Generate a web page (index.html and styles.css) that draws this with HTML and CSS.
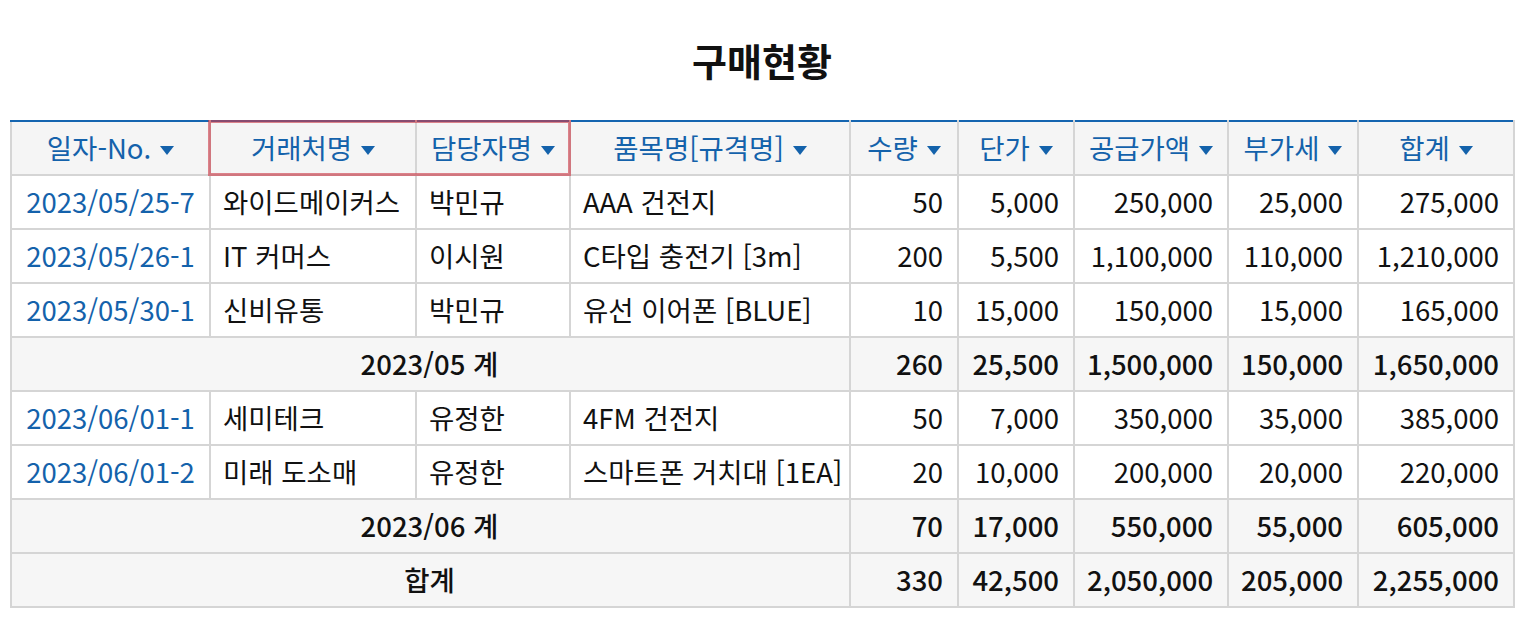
FILE: index.html
```html
<!DOCTYPE html>
<html lang="ko">
<head>
<meta charset="utf-8">
<title>구매현황</title>
<link rel="stylesheet" href="styles.css">
</head>
<body>
<div class="page">
  <h1 class="title">구매현황</h1>
  <div class="table-wrap">
    <table class="grid">
      <colgroup>
        <col style="width:199px">
        <col style="width:206px">
        <col style="width:154px">
        <col style="width:280px">
        <col style="width:108px">
        <col style="width:116px">
        <col style="width:154px">
        <col style="width:130px">
        <col style="width:156px">
      </colgroup>
      <thead>
        <tr>
          <th>일자-No.<span class="caret"></span></th>
          <th>거래처명<span class="caret"></span></th>
          <th>담당자명<span class="caret"></span></th>
          <th>품목명[규격명]<span class="caret"></span></th>
          <th>수량<span class="caret"></span></th>
          <th>단가<span class="caret"></span></th>
          <th>공급가액<span class="caret"></span></th>
          <th>부가세<span class="caret"></span></th>
          <th>합계<span class="caret"></span></th>
        </tr>
      </thead>
      <tbody>
        <tr>
          <td class="link">2023/05/25-7</td><td>와이드메이커스</td><td>박민규</td><td>AAA 건전지</td>
          <td class="num">50</td><td class="num">5,000</td><td class="num">250,000</td><td class="num">25,000</td><td class="num">275,000</td>
        </tr>
        <tr>
          <td class="link">2023/05/26-1</td><td>IT 커머스</td><td>이시원</td><td>C타입 충전기 [3m]</td>
          <td class="num">200</td><td class="num">5,500</td><td class="num">1,100,000</td><td class="num">110,000</td><td class="num">1,210,000</td>
        </tr>
        <tr>
          <td class="link">2023/05/30-1</td><td>신비유통</td><td>박민규</td><td>유선 이어폰 [BLUE]</td>
          <td class="num">10</td><td class="num">15,000</td><td class="num">150,000</td><td class="num">15,000</td><td class="num">165,000</td>
        </tr>
        <tr class="sum">
          <td colspan="4" class="label">2023/05 계</td>
          <td class="num">260</td><td class="num">25,500</td><td class="num">1,500,000</td><td class="num">150,000</td><td class="num">1,650,000</td>
        </tr>
        <tr>
          <td class="link">2023/06/01-1</td><td>세미테크</td><td>유정한</td><td>4FM 건전지</td>
          <td class="num">50</td><td class="num">7,000</td><td class="num">350,000</td><td class="num">35,000</td><td class="num">385,000</td>
        </tr>
        <tr>
          <td class="link">2023/06/01-2</td><td>미래 도소매</td><td>유정한</td><td>스마트폰 거치대 [1EA]</td>
          <td class="num">20</td><td class="num">10,000</td><td class="num">200,000</td><td class="num">20,000</td><td class="num">220,000</td>
        </tr>
        <tr class="sum">
          <td colspan="4" class="label">2023/06 계</td>
          <td class="num">70</td><td class="num">17,000</td><td class="num">550,000</td><td class="num">55,000</td><td class="num">605,000</td>
        </tr>
        <tr class="sum">
          <td colspan="4" class="label">합계</td>
          <td class="num">330</td><td class="num">42,500</td><td class="num">2,050,000</td><td class="num">205,000</td><td class="num">2,255,000</td>
        </tr>
      </tbody>
    </table>
    <div class="highlight"></div>
  </div>
</div>
</body>
</html>
```

FILE: styles.css
```css
* { box-sizing: border-box; }
html, body { margin: 0; padding: 0; background: #fff; }
body {
  font-family: "Noto Sans CJK KR", "Noto Sans", sans-serif;
  color: #111;
}
.page {
  padding: 0 10px;
}
.title {
  margin: 0;
  height: 120px;
  padding-top: 34px;
  text-align: center;
  font-size: 38px;
  line-height: 52px;
  font-weight: 700;
  color: #111;
}
.table-wrap {
  position: relative;
  width: 1504px;
}
.grid {
  width: 1504px;
  table-layout: fixed;
  border-collapse: collapse;
  border-top: 2px solid #1565b0;
  font-size: 27.5px;
  line-height: 1;
}
.grid th, .grid td {
  height: 54px;
  padding: 0 14px 0 12px;
  border: 2px solid #d5d5d5;
  white-space: nowrap;
  vertical-align: middle;
}
.grid thead th {
  border-top: 2px solid #1565b0;
  background: #f5f5f5;
  color: #1462ab;
  font-weight: 400;
  text-align: center;
  padding: 0 4px;
}
.caret {
  display: inline-block;
  width: 0;
  height: 0;
  margin-left: 9px;
  vertical-align: middle;
  position: relative;
  top: -1px;
  border-left: 7px solid transparent;
  border-right: 7px solid transparent;
  border-top: 9px solid #1462ab;
}
.grid td { background: #fff; color: #111; }
.grid td.link { color: #1462ab; text-align: center; padding: 0 4px; }
.grid td.num { text-align: right; }
.grid tr.sum td { background: #f6f6f6; font-weight: 500; }
.grid tr.sum td.label { text-align: center; }
.highlight {
  position: absolute;
  left: 198px;
  top: 0;
  width: 363px;
  height: 56px;
  border: 3px solid rgba(205, 60, 72, 0.62);
  pointer-events: none;
}
```
